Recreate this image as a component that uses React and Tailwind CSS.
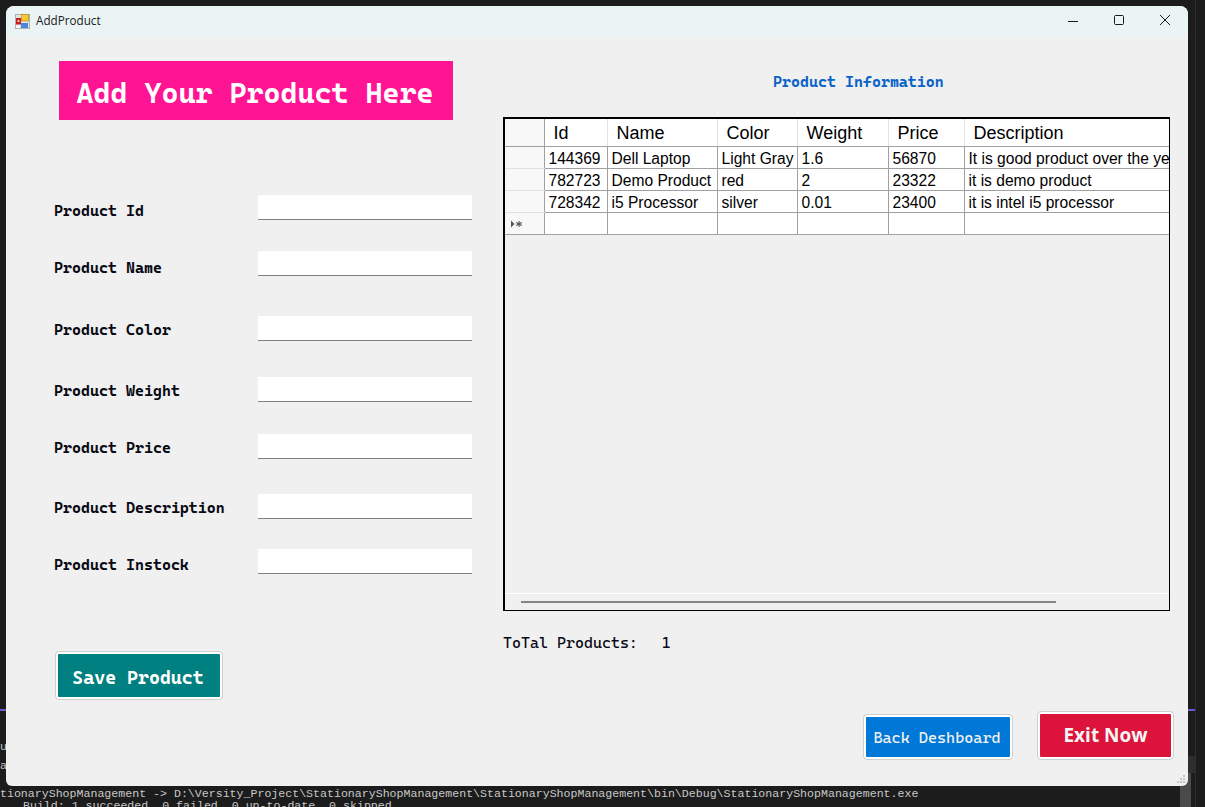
const mono = "font-['Cascadia_Mono','DejaVu_Sans_Mono','Liberation_Mono',monospace]";

const fields = [
  { label: "Product Id", top: "mt-[75px]", nudge: "pt-[8px]" },
  { label: "Product Name", top: "mt-[31px]", nudge: "pt-[9px]" },
  { label: "Product Color", top: "mt-[40px]", nudge: "pt-[6px]" },
  { label: "Product Weight", top: "mt-[36px]", nudge: "pt-[6px]" },
  { label: "Product Price", top: "mt-[32px]", nudge: "pt-[6px]" },
  { label: "Product Description", top: "mt-[35px]", nudge: "pt-[6px]" },
  { label: "Product Instock", top: "mt-[30px]", nudge: "pt-[8px]" },
];

const columns = [
  { name: "Id", width: "w-[63px]" },
  { name: "Name", width: "w-[110px]" },
  { name: "Color", width: "w-[80px]" },
  { name: "Weight", width: "w-[91px]" },
  { name: "Price", width: "w-[76px]" },
  { name: "Description", width: "w-[206px]" },
];

const rows = [
  ["144369", "Dell Laptop", "Light Gray", "1.6", "56870", "It is good product over the years"],
  ["782723", "Demo Product", "red", "2", "23322", "it is demo product"],
  ["728342", "i5 Processor", "silver", "0.01", "23400", "it is intel i5 processor"],
  ["", "", "", "", "", ""],
];

function AppIcon() {
  return (
    <svg width="15" height="15" viewBox="0 0 15 15" className="shrink-0">
      <rect x="0.5" y="0.5" width="14" height="14" fill="#e4e4e4" stroke="#b0b0b0" />
      <rect x="6.5" y="0.5" width="7" height="6.5" fill="#f6c83a" stroke="#b98a10" strokeWidth="0.7" />
      <rect x="1" y="4" width="5" height="6.5" fill="#c4201c" />
      <rect x="2.5" y="6" width="2" height="2" fill="#f4d0c0" />
      <rect x="6" y="9" width="7" height="5" fill="#4a86e0" />
      <rect x="1" y="11.5" width="4" height="2.5" fill="#f8f8f8" />
    </svg>
  );
}

function TitleBar() {
  return (
    <div className="flex h-[30px] shrink-0 items-center bg-[#eaf4f5] pl-[9px]">
      <AppIcon />
      <span className="ml-[6px] font-['Open_Sans',sans-serif] text-[11.7px] text-[#1a1a1a]">AddProduct</span>
      <div className="ml-auto flex items-center">
        <svg width="46" height="30" viewBox="0 0 46 30">
          <path d="M18 15.5h10" stroke="#1a1a1a" strokeWidth="1" />
        </svg>
        <svg width="46" height="30" viewBox="0 0 46 30">
          <rect x="18.5" y="9.5" width="9" height="9" rx="1" fill="none" stroke="#1a1a1a" strokeWidth="1" />
        </svg>
        <svg width="46" height="30" viewBox="0 0 46 30">
          <path d="M18 9l10 10M28 9l-10 10" stroke="#1a1a1a" strokeWidth="1" />
        </svg>
      </div>
    </div>
  );
}

function ProductForm() {
  return (
    <div className="w-[497px] shrink-0 pl-[48px]">
      <div className={`${mono} ml-[5px] mt-[25px] flex h-[59px] w-[394px] items-center justify-center bg-[#ff1493] pt-[6px] pr-[2px] text-[29px] font-bold text-white`}>
        Add Your Product Here
      </div>
      {fields.map((f) => (
        <div key={f.label} className={`${f.top} flex h-[25px] items-start`}>
          <label className={`${mono} ${f.nudge} w-[204px] text-[15.35px] leading-[16px] font-bold text-[#0a0a14]`}>{f.label}</label>
          <input className="h-[25px] w-[214px] border-b border-[#808080] bg-white" />
        </div>
      ))}
      <button className={`${mono} ml-[2px] mt-[78px] h-[47px] w-[166px] rounded-[3px] border-[2px] border-white bg-[#008080] pt-[5px] pr-[2px] text-[18.7px] font-bold text-white outline outline-[#cfcfcf]`}>
        Save Product
      </button>
    </div>
  );
}

function NewRowMarker() {
  return (
    <svg width="13" height="8" viewBox="0 0 13 8" className="ml-[5px] mt-[2px] block">
      <path d="M1 0.5l3.5 3.5L1 7.5z" fill="#555555" />
      <path d="M9 1v6M6.2 2.4l5.6 3.2M11.8 2.4L6.2 5.6" stroke="#555555" strokeWidth="1.1" />
    </svg>
  );
}

function ProductTable() {
  return (
    <div className="flex h-[494px] w-[667px] flex-col overflow-hidden border-[2px] border-r-[1px] border-b-[1px] border-black bg-[#f0f0f0]">
      <div className="grow overflow-hidden">
        <table className="w-[665px] table-fixed border-collapse font-['Liberation_Sans',sans-serif] text-black">
          <thead>
            <tr className="h-[27px] bg-white text-[18px] leading-none">
              <th className="w-[39px] border-r border-b border-r-[#a0a0a0] border-b-[#a0a0a0] bg-[#f8f8f8]"></th>
              {columns.map((c) => (
                <th key={c.name} className={`${c.width} border-r border-b border-r-[#e2e2e2] border-b-[#a0a0a0] pt-[2px] pl-[9px] text-left font-normal`}>
                  {c.name}
                </th>
              ))}
            </tr>
          </thead>
          <tbody>
            {rows.map((row, i) => (
              <tr key={i} className="h-[22px] bg-white text-[15.6px] leading-none">
                <td className={`border-r border-b border-r-[#a0a0a0] bg-[#f8f8f8] p-0 ${i === 3 ? "border-b-[#a0a0a0]" : "border-b-[#e2e2e2]"}`}>
                  {i === 3 && <NewRowMarker />}
                </td>
                {row.map((cell, j) => (
                  <td key={j} className="overflow-hidden border-r border-b border-[#a0a0a0] pt-[4px] pl-[4px] whitespace-nowrap">
                    {cell}
                  </td>
                ))}
              </tr>
            ))}
          </tbody>
        </table>
      </div>
      <div className="h-[17px] shrink-0 border-t border-white pt-[7px] pl-[16px]">
        <div className="h-[2px] w-[535px] bg-[#858585]"></div>
      </div>
    </div>
  );
}

function ResizeGrip() {
  return (
    <svg width="10" height="10" viewBox="0 0 10 10" className="absolute right-[2px] bottom-[1px]">
      <path d="M7 0h2v2H7zM4 3h2v2H4zM7 3h2v2H7zM1 6h2v2H1zM4 6h2v2H4zM7 6h2v2H7z" fill="#c4c4c4" />
    </svg>
  );
}

function BehindWindow() {
  return (
    <>
      <div className="absolute top-[709px] left-0 h-[2px] w-[6px] bg-[#6a5acd]"></div>
      <div className="absolute top-[709px] left-[1188px] h-[2px] w-[8px] bg-[#6a5acd]"></div>
      <div className="absolute top-[0px] left-[1195px] h-[807px] w-[1px] bg-[#2e2e2e]"></div>
      <div className="absolute top-[756px] left-[1188px] h-[17px] w-[7px] bg-[#2e2e2e]"></div>
      <div className="absolute top-[773px] left-[1180px] h-[34px] w-[11px] bg-[#4a4a4a]"></div>
      <span className="absolute top-[738px] left-0 font-['Liberation_Mono',monospace] text-[11.6px] text-[#c8c8c8]">u</span>
      <span className="absolute top-[757px] left-0 font-['Liberation_Mono',monospace] text-[11.6px] text-[#c8c8c8]">a</span>
    </>
  );
}

function BuildOutput() {
  return (
    <div className="relative -ml-[6px] pt-[2px] font-['Liberation_Mono',monospace] text-[11.6px] leading-[12px] whitespace-nowrap text-[#c8c8c8]">
      <div>tionaryShopManagement -&gt; D:\Versity_Project\StationaryShopManagement\StationaryShopManagement\bin\Debug\StationaryShopManagement.exe</div>
      <div className="pl-[23px]">Build: 1 succeeded, 0 failed, 0 up-to-date, 0 skipped</div>
    </div>
  );
}

export default function App() {
  return (
    <div className="relative h-[807px] w-[1205px] overflow-hidden bg-[#1c1c1c] pt-[6px] pl-[6px]">
      <BehindWindow />
      <div className="relative flex h-[780px] w-[1182px] flex-col overflow-hidden rounded-t-[8px] rounded-b-[6px] bg-[#f0f0f0]">
        <TitleBar />
        <div className="flex grow">
          <ProductForm />
          <div className="flex grow flex-col">
            <h2 className={`${mono} mt-[35px] ml-[270px] text-[15.35px] leading-[22px] font-bold text-[#0a64c8]`}>Product Information</h2>
            <div className="mt-[24px]">
              <ProductTable />
            </div>
            <p className={`${mono} mt-[21px] text-[15.35px] leading-[22px] text-[#0a0a14]`}>
              ToTal Products:<span className="ml-[24px]">1</span>
            </p>
            <div className="mt-[58px] flex items-end">
              <button className={`${mono} ml-[361px] h-[44px] w-[148px] rounded-[3px] border-[2px] border-white bg-[#0078d7] pt-[3px] pr-[2px] text-[15.5px] text-[#f0f0f0] outline outline-[#cfcfcf]`}>
                Back Deshboard
              </button>
              <button className="ml-[26px] h-[47px] w-[135px] rounded-[3px] border-[2px] border-white bg-[#dc143c] font-['Open_Sans',sans-serif] text-[19px] font-bold text-[#f4f4f4] outline outline-[#cfcfcf]">
                Exit Now
              </button>
            </div>
          </div>
        </div>
        <ResizeGrip />
      </div>
      <BuildOutput />
    </div>
  );
}
